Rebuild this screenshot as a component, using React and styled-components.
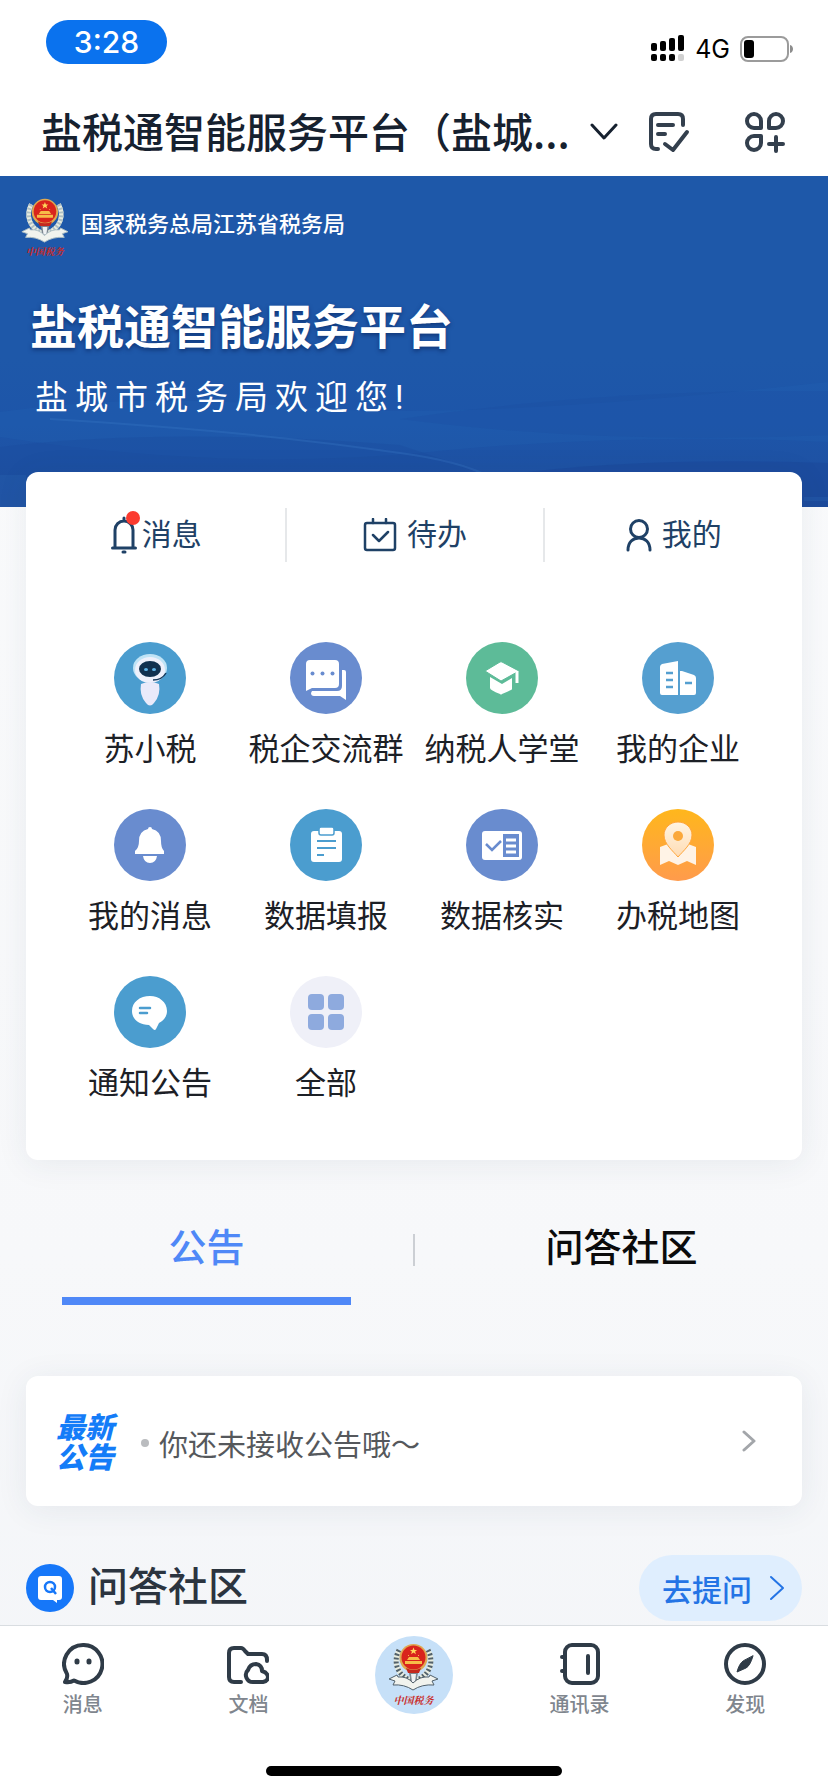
import styled, { createGlobalStyle } from "styled-components";

const GlobalStyle = createGlobalStyle`
  * {
    box-sizing: border-box;
  }
  body {
    margin: 0;
    background: #f7f8fa;
    font-family: Roboto, "Noto Sans CJK SC", sans-serif;
  }
  button {
    margin: 0;
    padding: 0;
    border: none;
    background: none;
    font-family: inherit;
    color: inherit;
    cursor: pointer;
  }
  svg {
    display: block;
    flex-shrink: 0;
  }
  h1, h2, p {
    margin: 0;
  }
`;

const Page = styled.div`
  min-height: 100vh;
  display: flex;
  flex-direction: column;
  background: linear-gradient(#fbfcfd, #f7f8fa 70%, #f3f5f8);
`;

const StatusBar = styled.div`
  height: 88px;
  padding: 20px 34px 24px 46px;
  display: flex;
  justify-content: space-between;
  align-items: flex-end;
  background: #ffffff;
`;

const Clock = styled.div`
  width: 121px;
  height: 44px;
  border-radius: 22px;
  background: #0a72ee;
  color: #ffffff;
  font-family: Inter, sans-serif;
  font-size: 30px;
  font-weight: 500;
  line-height: 44px;
  text-align: center;
`;

const StatusIcons = styled.div`
  height: 30px;
  display: flex;
  align-items: center;
  gap: 10px;
  font-family: Inter, sans-serif;
  font-size: 25px;
  line-height: 30px;
  color: #000000;
`;

const TitleBar = styled.header`
  height: 88px;
  padding: 0 42px 0 41px;
  display: flex;
  align-items: center;
  background: #ffffff;
  color: #16212f;
`;

const TitleButton = styled.button`
  display: flex;
  align-items: center;
  gap: 20px;
`;

const PageTitle = styled.h1`
  padding-bottom: 4px;
  font-family: "Noto Sans CJK SC", sans-serif;
  font-size: 41px;
  font-weight: 500;
  line-height: 60px;
  white-space: nowrap;
`;

const TitleActions = styled.div`
  margin-left: auto;
  display: flex;
  gap: 54px;
`;

const Banner = styled.section`
  position: relative;
  height: 331px;
  padding: 20px 20px 0;
  background: linear-gradient(#1e58a9 55%, #1d55a9 75%, #1f4f9f);
  color: #ffffff;
`;

const Skyline = styled.svg`
  position: absolute;
  left: 0;
  bottom: 0;
  width: 100%;
  height: 150px;
`;

const Bureau = styled.div`
  display: flex;
  align-items: flex-start;
  gap: 13px;
  font-size: 22px;
  font-weight: 500;
  line-height: 58px;
`;

const BannerTitle = styled.h2`
  padding: 32px 0 0 10px;
  font-size: 47px;
  font-weight: 700;
  line-height: 72px;
  text-shadow: 0 2px 4px rgba(0, 20, 70, 0.5);
`;

const Welcome = styled.p`
  position: relative;
  padding: 10px 0 0 15px;
  font-size: 33px;
  line-height: 48px;
  letter-spacing: 7px;
`;

const Card = styled.section`
  position: relative;
  margin: 0 26px;
  border-radius: 12px;
  background: #ffffff;
  box-shadow: 0 4px 32px rgba(40, 60, 90, 0.08);
`;

const MainCard = styled(Card)`
  margin-top: -35px;
  padding: 36px 0 54px;
`;

const Shortcuts = styled.div`
  display: flex;
`;

const Shortcut = styled.button`
  position: relative;
  flex: 1;
  height: 54px;
  display: flex;
  justify-content: center;
  align-items: center;
  gap: ${(props) => props.$gap}px;
  border-left: 2px solid ${(props) => (props.$first ? "transparent" : "#e6e8ea")};
  color: #1f4166;
  font-size: 30px;
  line-height: 40px;
`;

const BellWrap = styled.span`
  position: relative;
`;

const RedDot = styled.span`
  position: absolute;
  top: -5px;
  right: -3px;
  width: 14px;
  height: 14px;
  border-radius: 50%;
  background: #fb3b2f;
`;

const AppGrid = styled.div`
  padding: 80px 36px 0;
  display: grid;
  grid-template-columns: repeat(4, 1fr);
  row-gap: 37px;
`;

const AppItem = styled.button`
  display: flex;
  flex-direction: column;
  align-items: center;
  gap: 14px;
  color: #1c2026;
  font-size: 31px;
  line-height: 44px;
  white-space: nowrap;
`;

const Tabs = styled.div`
  margin-top: 50px;
  display: flex;
  align-items: flex-start;
`;

const Tab = styled.button`
  flex: 1;
  display: flex;
  flex-direction: column;
  align-items: center;
  color: ${(props) => (props.$active ? "#4f88f7" : "#0b0b0c")};
  font-size: 38px;
  font-weight: 500;
  line-height: 76px;

  &::after {
    content: "";
    width: 70%;
    height: 8px;
    margin-top: 11px;
    background: ${(props) => (props.$active ? "#4f88f7" : "transparent")};
  }
`;

const TabDivider = styled.span`
  width: 2px;
  height: 32px;
  margin-top: 24px;
  background: #cccfd4;
`;

const NoticeCard = styled(Card)`
  height: 130px;
  margin-top: 71px;
  padding: 0 46px 0 30px;
  display: flex;
  align-items: center;
  color: #a3a6aa;
`;

const NoticeBadge = styled.div`
  width: 62px;
  padding-top: 4px;
  color: #147cf8;
  font-size: 29px;
  font-weight: 900;
  font-style: italic;
  line-height: 30px;
`;

const NoticeText = styled.p`
  flex: 1;
  margin-left: 23px;
  padding-top: 4px;
  display: flex;
  align-items: center;
  gap: 10px;
  color: #55585c;
  font-family: "Noto Sans CJK SC", sans-serif;
  font-size: 29px;
  line-height: 40px;

  &::before {
    content: "";
    width: 8px;
    height: 8px;
    border-radius: 50%;
    background: #babcbf;
  }
`;

const Community = styled.section`
  padding: 49px 26px 4px;
  display: flex;
  align-items: center;
  gap: 14px;
`;

const CommunityTitle = styled.h2`
  color: #2b343f;
  font-size: 40px;
  font-weight: 500;
  line-height: 60px;
`;

const AskButton = styled.button`
  height: 66px;
  margin-left: auto;
  padding: 0 17px 0 23px;
  display: flex;
  align-items: center;
  gap: 17px;
  border-radius: 33px;
  background: #dfeefe;
  color: #2474e5;
  font-size: 30px;
  font-weight: 500;
`;

const TabBar = styled.nav`
  margin-top: auto;
  padding: 10px 0 16px;
  border-top: 1px solid #d9dde1;
  background: #ffffff;
`;

const NavItems = styled.div`
  display: flex;
  height: 130px;
`;

const NavItem = styled.button`
  flex: 1;
  display: flex;
  flex-direction: column;
  align-items: center;
  padding-top: ${(props) => (props.$center ? 0 : 7)}px;
  gap: 5px;
  color: #7f868e;
  font-size: 20px;
  font-weight: 500;
  line-height: 30px;
`;

const HomeIndicator = styled.div`
  width: 296px;
  height: 10px;
  margin: 0 auto;
  border-radius: 5px;
  background: #000000;
`;

const SignalIcon = () => (
  <svg width="34" height="28" viewBox="0 0 34 28">
    <rect x="0" y="8" width="6" height="8" rx="2" />
    <rect x="9" y="6" width="6" height="10" rx="2" />
    <rect x="18" y="3" width="6" height="13" rx="2" />
    <rect x="27" y="0" width="6" height="16" rx="2" />
    <rect x="0" y="19" width="6" height="7" rx="2" />
    <rect x="9" y="19" width="6" height="7" rx="2" />
    <rect x="18" y="19" width="6" height="7" rx="2" />
    <rect x="27" y="19" width="6" height="7" rx="2" fill="#d0d0d0" />
  </svg>
);

const BatteryIcon = () => (
  <svg width="54" height="26" viewBox="0 0 54 26">
    <rect x="1" y="1" width="47" height="24" rx="7" fill="none" stroke="#9b9b9b" strokeWidth="2" />
    <rect x="4" y="4" width="10" height="18" rx="3" />
    <path d="M50 9c4 1 4 7 0 8z" fill="#8d8d8d" />
  </svg>
);

const Chevron = ({ width, height, d, stroke = 3 }) => (
  <svg
    width={width}
    height={height}
    fill="none"
    stroke="currentColor"
    strokeWidth={stroke}
    strokeLinecap="round"
    strokeLinejoin="round"
  >
    <path d={d} />
  </svg>
);

const TodoIcon = () => (
  <svg width="42" height="42" viewBox="0 0 42 42" fill="none" stroke="#333f4d" strokeWidth="4" strokeLinecap="round" strokeLinejoin="round">
    <path d="M35 14V8q0-5-5-5H8Q3 3 3 8v25q0 5 5 5h2M10 14h15M10 23h7M17 33l8 6 14-18" />
  </svg>
);

const AddAppIcon = () => (
  <svg width="42" height="42" viewBox="0 0 42 42" fill="none" stroke="#333f4d" strokeWidth="4" strokeLinecap="round" strokeLinejoin="round">
    <path d="M10 3a7 7 0 0 1 7 7v7h-7a7 7 0 0 1 0-14zM32 3a7 7 0 0 1 0 14h-7v-7a7 7 0 0 1 7-7zM10 25h7v7a7 7 0 1 1-7-7zM32 26v14M25 33h14" />
  </svg>
);

// National tax emblem, with the calligraphy line below it
const Emblem = ({ leaf = "#52616b", children, ...rest }) => (
  <svg {...rest}>
    {children}
    <path d="M24 14c-6 11-3 25 13 31M53 14c6 11 3 25-13 31" fill="none" stroke="#e8ecdf" strokeWidth="5" />
    <path
      d="M24 14c-6 11-3 25 13 31M53 14c6 11 3 25-13 31"
      fill="none"
      stroke={leaf}
      strokeWidth="5"
      strokeDasharray="2 2"
    />
    <circle cx="38.5" cy="22" r="14" fill="#e0a850" />
    <circle cx="38.5" cy="21.5" r="12" fill="#d9241c" />
    <path d="M38.5 11.500l1 2.500h2.600l-2 1.600.8 2.600-2.400-1.600-2.400 1.600.8-2.600-2-1.600h2.600z" fill="#ffd75a" />
    <path d="M32 24h13l-2-3h-9zM30 25h17v3H30zM33 20h1v-1h-1zM43 20h1v-1h-1z" fill="#f7bd48" />
    <path d="M31 32q7.500 4 15 0l-2 5H33z" fill="#c4281e" />
    <path d="M34 37h9l-2 10h-5z" fill="#7d8790" />
    <path d="M36 38h5l-1 8h-3z" fill="#eef1f3" />
    <path
      d="M14 43l8-4 1 2q9-1 15 6 7-7 16-6l1-2 8 4-6 2 2 4q-12-1-21 5-9-6-20-5l2-4z"
      fill="#f1f3ee"
      stroke={leaf}
      strokeWidth="1"
    />
    <text
      x="38.500"
      y="68"
      textAnchor="middle"
      fontFamily="Noto Serif CJK SC, Noto Sans CJK SC, serif"
      fontSize="10"
      fontWeight="700"
      fontStyle="italic"
      fill="#c92a27"
    >
      中国税务
    </text>
  </svg>
);

const BellOutline = () => (
  <svg width="26" height="38" viewBox="0 0 26 38" fill="none" stroke="currentColor" strokeWidth="3" strokeLinecap="round">
    <path d="M4 31V14a9 9 0 0 1 18 0v17M1.500 32h23M13 2v3M12 36h2" />
  </svg>
);

const CalendarIcon = () => (
  <svg width="34" height="34" viewBox="0 0 34 34" fill="none" stroke="currentColor" strokeWidth="2.500" strokeLinecap="round" strokeLinejoin="round">
    <rect x="2" y="5" width="30" height="27" rx="2" />
    <path d="M10 1v4M23 1v4M10 17l6 6 9-9" />
  </svg>
);

const PersonIcon = () => (
  <svg width="26" height="34" viewBox="0 0 26 34" fill="none" stroke="currentColor" strokeWidth="3" strokeLinecap="round">
    <circle cx="13" cy="11" r="8.500" />
    <path d="M2 32c0-8 5-12 11-12s11 4 11 12" />
  </svg>
);

const AppIcon = ({ color, children }) => (
  <svg width="72" height="72" viewBox="0 0 72 72">
    <circle cx="36" cy="36" r="36" fill={color} />
    {children}
  </svg>
);

const apps = [
  {
    name: "苏小税",
    color: "#4b9dcf",
    icon: (
      <>
        <ellipse cx="36" cy="26" rx="17" ry="14" fill="#bfe3f6" />
        <ellipse cx="36" cy="28" rx="15" ry="13" fill="#eef0fb" />
        <ellipse cx="36" cy="27" rx="11" ry="8" fill="#10304f" />
        <ellipse cx="32" cy="27.500" rx="2" ry="1.500" fill="#5fb3e8" />
        <ellipse cx="40" cy="27.500" rx="2" ry="1.500" fill="#5fb3e8" />
        <path d="M52 31q-4 7-13 7" fill="none" stroke="#17395c" strokeWidth="1.500" />
        <path d="M27 42q9-4 18 0 2 11-5 19-4 5-8 0-7-8-5-19z" fill="#eaeafa" />
      </>
    ),
  },
  {
    name: "税企交流群",
    color: "#698ccf",
    icon: (
      <>
        <path d="M20 18h25q4 0 4 4v20q0 4-4 4H22l-6 3V22q0-4 4-4z" fill="#fff" />
        <circle cx="22.500" cy="31.500" r="2" fill="#698ccf" />
        <circle cx="32.500" cy="31.500" r="2" fill="#698ccf" />
        <circle cx="42.500" cy="31.500" r="2" fill="#698ccf" />
        <path d="M52 28h2q2 0 2 2v28l-6-4H24q-3 0-3-3l1-2h25q5 0 5-5z" fill="#fff" />
      </>
    ),
  },
  {
    name: "纳税人学堂",
    color: "#5dbb98",
    icon: (
      <>
        <path d="M24 35l12 7 10-6v11q0 1-10 5-1 1-2 0-10-4-10-6z" fill="#fff" />
        <path
          d="M19 29l15-9q1-.5 2 0l17 9-18 10z"
          fill="#fff"
          stroke="#5dbb98"
          strokeWidth="1"
        />
        <path d="M51 29v12" stroke="#fff" strokeWidth="3" />
      </>
    ),
  },
  {
    name: "我的企业",
    color: "#559fd0",
    icon: (
      <>
        <path d="M18 25q0-2 2-3l16-3v34H20q-2 0-2-2zM38 29h2l12 4q2 1 2 3v15q0 2-2 2H38z" fill="#fff" />
        <path d="M24 31h7M24 38h7M24 45h7M43 41h7" stroke="#559fd0" strokeWidth="2.500" />
      </>
    ),
  },
  {
    name: "我的消息",
    color: "#698ccf",
    icon: (
      <path
        d="M34 20q0-2 2-2t2 2q9 2 9 12 0 7 3 10v3H21v-3q4-3 4-10 0-10 9-12zM29 47h14q-1 7-7 7t-7-7z"
        fill="#fff"
      />
    ),
  },
  {
    name: "数据填报",
    color: "#4b9dcf",
    icon: (
      <>
        <rect x="21" y="22" width="31" height="31" rx="3" fill="#fff" />
        <rect x="29" y="18" width="15" height="8" rx="2" fill="#fff" stroke="#4b9dcf" strokeWidth="1.500" />
        <path d="M27 32h19M27 39h19M27 46h7" stroke="#4b9dcf" strokeWidth="2" />
      </>
    ),
  },
  {
    name: "数据核实",
    color: "#698ccf",
    icon: (
      <>
        <rect x="16" y="22" width="40" height="29" rx="3" fill="#fff" />
        <path d="M20 35l6 6 9-9" fill="none" stroke="#698ccf" strokeWidth="2.500" />
        <path d="M37 25h16v23H37z" fill="#698ccf" />
        <path d="M40 31h10M40 37h10M40 43h10" stroke="#fff" strokeWidth="3" />
      </>
    ),
  },
  {
    name: "办税地图",
    color: "url(#mapBg)",
    icon: (
      <>
        <defs>
          <linearGradient id="mapBg" x1="0" y1="0" x2="0" y2="1">
            <stop offset="0" stopColor="#ffb71c" />
            <stop offset="1" stopColor="#ff9b4c" />
          </linearGradient>
          <linearGradient id="mapPin" x1="0" y1="0" x2="0" y2="1">
            <stop offset="0" stopColor="#fff4e2" />
            <stop offset="1" stopColor="#ffdcb4" />
          </linearGradient>
        </defs>
        <path d="M18 38l8-3 10 5 10-5 8 3v18l-9-4-9 4-9-4-9 4z" fill="#fff3e6" />
        <path d="M36 13c8 0 14 6 14 13 0 9-9 16-14 22-5-6-14-13-14-22 0-7 6-13 14-13z" fill="url(#mapPin)" stroke="#ffa63a" strokeWidth="1" />
        <circle cx="36" cy="27" r="5" fill="#fba83a" />
      </>
    ),
  },
  {
    name: "通知公告",
    color: "#4b9dcf",
    icon: (
      <>
        <path d="M36 20c9 0 17 6 17 15 0 6-4 10-8 12l-3 6q-1 2-3 0l-4-4c-10 0-17-6-17-14 0-9 8-15 18-15z" fill="#fff" />
        <path d="M26 32h10M26 37h7" stroke="#4b9dcf" strokeWidth="2.500" strokeLinecap="round" />
      </>
    ),
  },
  {
    name: "全部",
    color: "#eff0f8",
    icon: (
      <g fill="#8eaade">
        <rect x="18" y="18" width="16" height="16" rx="4" />
        <rect x="38" y="18" width="16" height="16" rx="4" />
        <rect x="18" y="38" width="16" height="16" rx="4" />
        <rect x="38" y="38" width="16" height="16" rx="4" />
      </g>
    ),
  },
];

const QuestionIcon = () => (
  <svg width="48" height="48" viewBox="0 0 48 48">
    <circle cx="24" cy="24" r="24" fill="#1677f9" />
    <path d="M15 12h18q3 0 3 3v18q0 3-3 3h-2v3l-4-3H15q-3 0-3-3V15q0-3 3-3z" fill="#fff" />
    <circle cx="24" cy="23" r="5" fill="none" stroke="#1677f9" strokeWidth="2.500" />
    <path d="M25 24l5 6" stroke="#1677f9" strokeWidth="2.500" />
  </svg>
);

const NavIcon = ({ children }) => (
  <svg width="42" height="42" viewBox="0 0 42 42" fill="none" stroke="#2f3b47" strokeWidth="4" strokeLinecap="round" strokeLinejoin="round">
    {children}
  </svg>
);

const navs = [
  {
    name: "消息",
    icon: (
      <>
        <path d="M21 2a19 19 0 1 1-9 35.500Q8 40 3 39q3-4 2-8A19 19 0 0 1 21 2z" />
        <path d="M15 18v1M27 18v1" strokeWidth="5" />
      </>
    ),
  },
  {
    name: "文档",
    icon: (
      <>
        <path d="M14 39H7q-5 0-5-5V10q0-5 5-5h7q2 0 4 3l3 3h14q5 0 5 6v1" />
        <path d="M26 39a7 7 0 0 1-5-12q2-6 8-6 6 1 6 7 6 2 6 6t-5 5z" />
      </>
    ),
  },
  { center: true },
  {
    name: "通讯录",
    icon: (
      <>
        <rect x="6" y="2" width="33" height="38" rx="7" />
        <path d="M29 13v17M3 14h2M3 28h2" />
      </>
    ),
  },
  {
    name: "发现",
    icon: (
      <>
        <circle cx="21" cy="21" r="19" />
        <path d="M29 13q-3 10-7 12l-9 4q2-8 6-11z" fill="#2f3b47" strokeWidth="1" />
      </>
    ),
  },
];

const App = () => {
  return (
    <>
      <GlobalStyle />
      <Page>
        <StatusBar>
          <Clock>3:28</Clock>
          <StatusIcons>
            <SignalIcon />
            4G
            <BatteryIcon />
          </StatusIcons>
        </StatusBar>

        <TitleBar>
          <TitleButton>
            <PageTitle>盐税通智能服务平台（盐城...</PageTitle>
            <Chevron width={28} height={18} d="M2 2l12 13 12-13" />
          </TitleButton>
          <TitleActions>
            <button aria-label="任务">
              <TodoIcon />
            </button>
            <button aria-label="更多应用">
              <AddAppIcon />
            </button>
          </TitleActions>
        </TitleBar>

        <Banner>
          <Skyline viewBox="0 0 828 150" preserveAspectRatio="none" aria-hidden="true">
            <path d="M0 55q140-20 300-5t528-25v60q-200-10-400 10T0 80z" fill="#2468b8" opacity="0.2" />
            <path d="M400 62q200-30 428-28v44q-230 10-428-16z" fill="#1b4aa0" opacity="0.25" />
            <path d="M0 90q160-20 400-2l90 30v32H0z" fill="#1c4a9b" opacity="0.3" />
            <path d="M440 128q160-30 388-22v44H440z" fill="#1a4496" opacity="0.4" />
            <path d="M50 62q200 12 350 34 60 8 90 24" fill="none" stroke="#3a7cc6" strokeWidth="2" opacity="0.3" />
            <path d="M0 118h26v32H0zM804 140h24v4h-24z" fill="#2a68b4" opacity="0.3" />
          </Skyline>
          <Bureau>
            <Emblem width="48" height="64" viewBox="12 6 51 66" leaf="#aebfc4" />
            <span>国家税务总局江苏省税务局</span>
          </Bureau>
          <BannerTitle>盐税通智能服务平台</BannerTitle>
          <Welcome>盐城市税务局欢迎您!</Welcome>
        </Banner>

        <MainCard>
          <Shortcuts>
            <Shortcut $first $gap={5}>
              <BellWrap>
                <BellOutline />
                <RedDot />
              </BellWrap>
              消息
            </Shortcut>
            <Shortcut $gap={10}>
              <CalendarIcon />
              待办
            </Shortcut>
            <Shortcut $gap={10}>
              <PersonIcon />
              我的
            </Shortcut>
          </Shortcuts>
          <AppGrid>
            {apps.map((app) => (
              <AppItem key={app.name}>
                <AppIcon color={app.color}>{app.icon}</AppIcon>
                {app.name}
              </AppItem>
            ))}
          </AppGrid>
        </MainCard>

        <Tabs>
          <Tab $active>公告</Tab>
          <TabDivider />
          <Tab>问答社区</Tab>
        </Tabs>

        <NoticeCard>
          <NoticeBadge>
            最新
            <br />
            公告
          </NoticeBadge>
          <NoticeText>你还未接收公告哦～</NoticeText>
          <Chevron width={14} height={22} d="M2 2l10 9-10 9" />
        </NoticeCard>

        <Community>
          <QuestionIcon />
          <CommunityTitle>问答社区</CommunityTitle>
          <AskButton>
            去提问
            <Chevron width={16} height={26} d="M2 2l12 11-12 11" stroke={2} />
          </AskButton>
        </Community>

        <TabBar>
          <NavItems>
            {navs.map((nav) =>
              nav.center ? (
                <NavItem key="home" $center aria-label="首页">
                  <Emblem width="78" height="78" viewBox="0 0 78 78">
                    <circle cx="39" cy="39" r="39" fill="#c6e0f8" />
                  </Emblem>
                </NavItem>
              ) : (
                <NavItem key={nav.name}>
                  <NavIcon>{nav.icon}</NavIcon>
                  {nav.name}
                </NavItem>
              )
            )}
          </NavItems>
          <HomeIndicator />
        </TabBar>
      </Page>
    </>
  );
};

export default App;
